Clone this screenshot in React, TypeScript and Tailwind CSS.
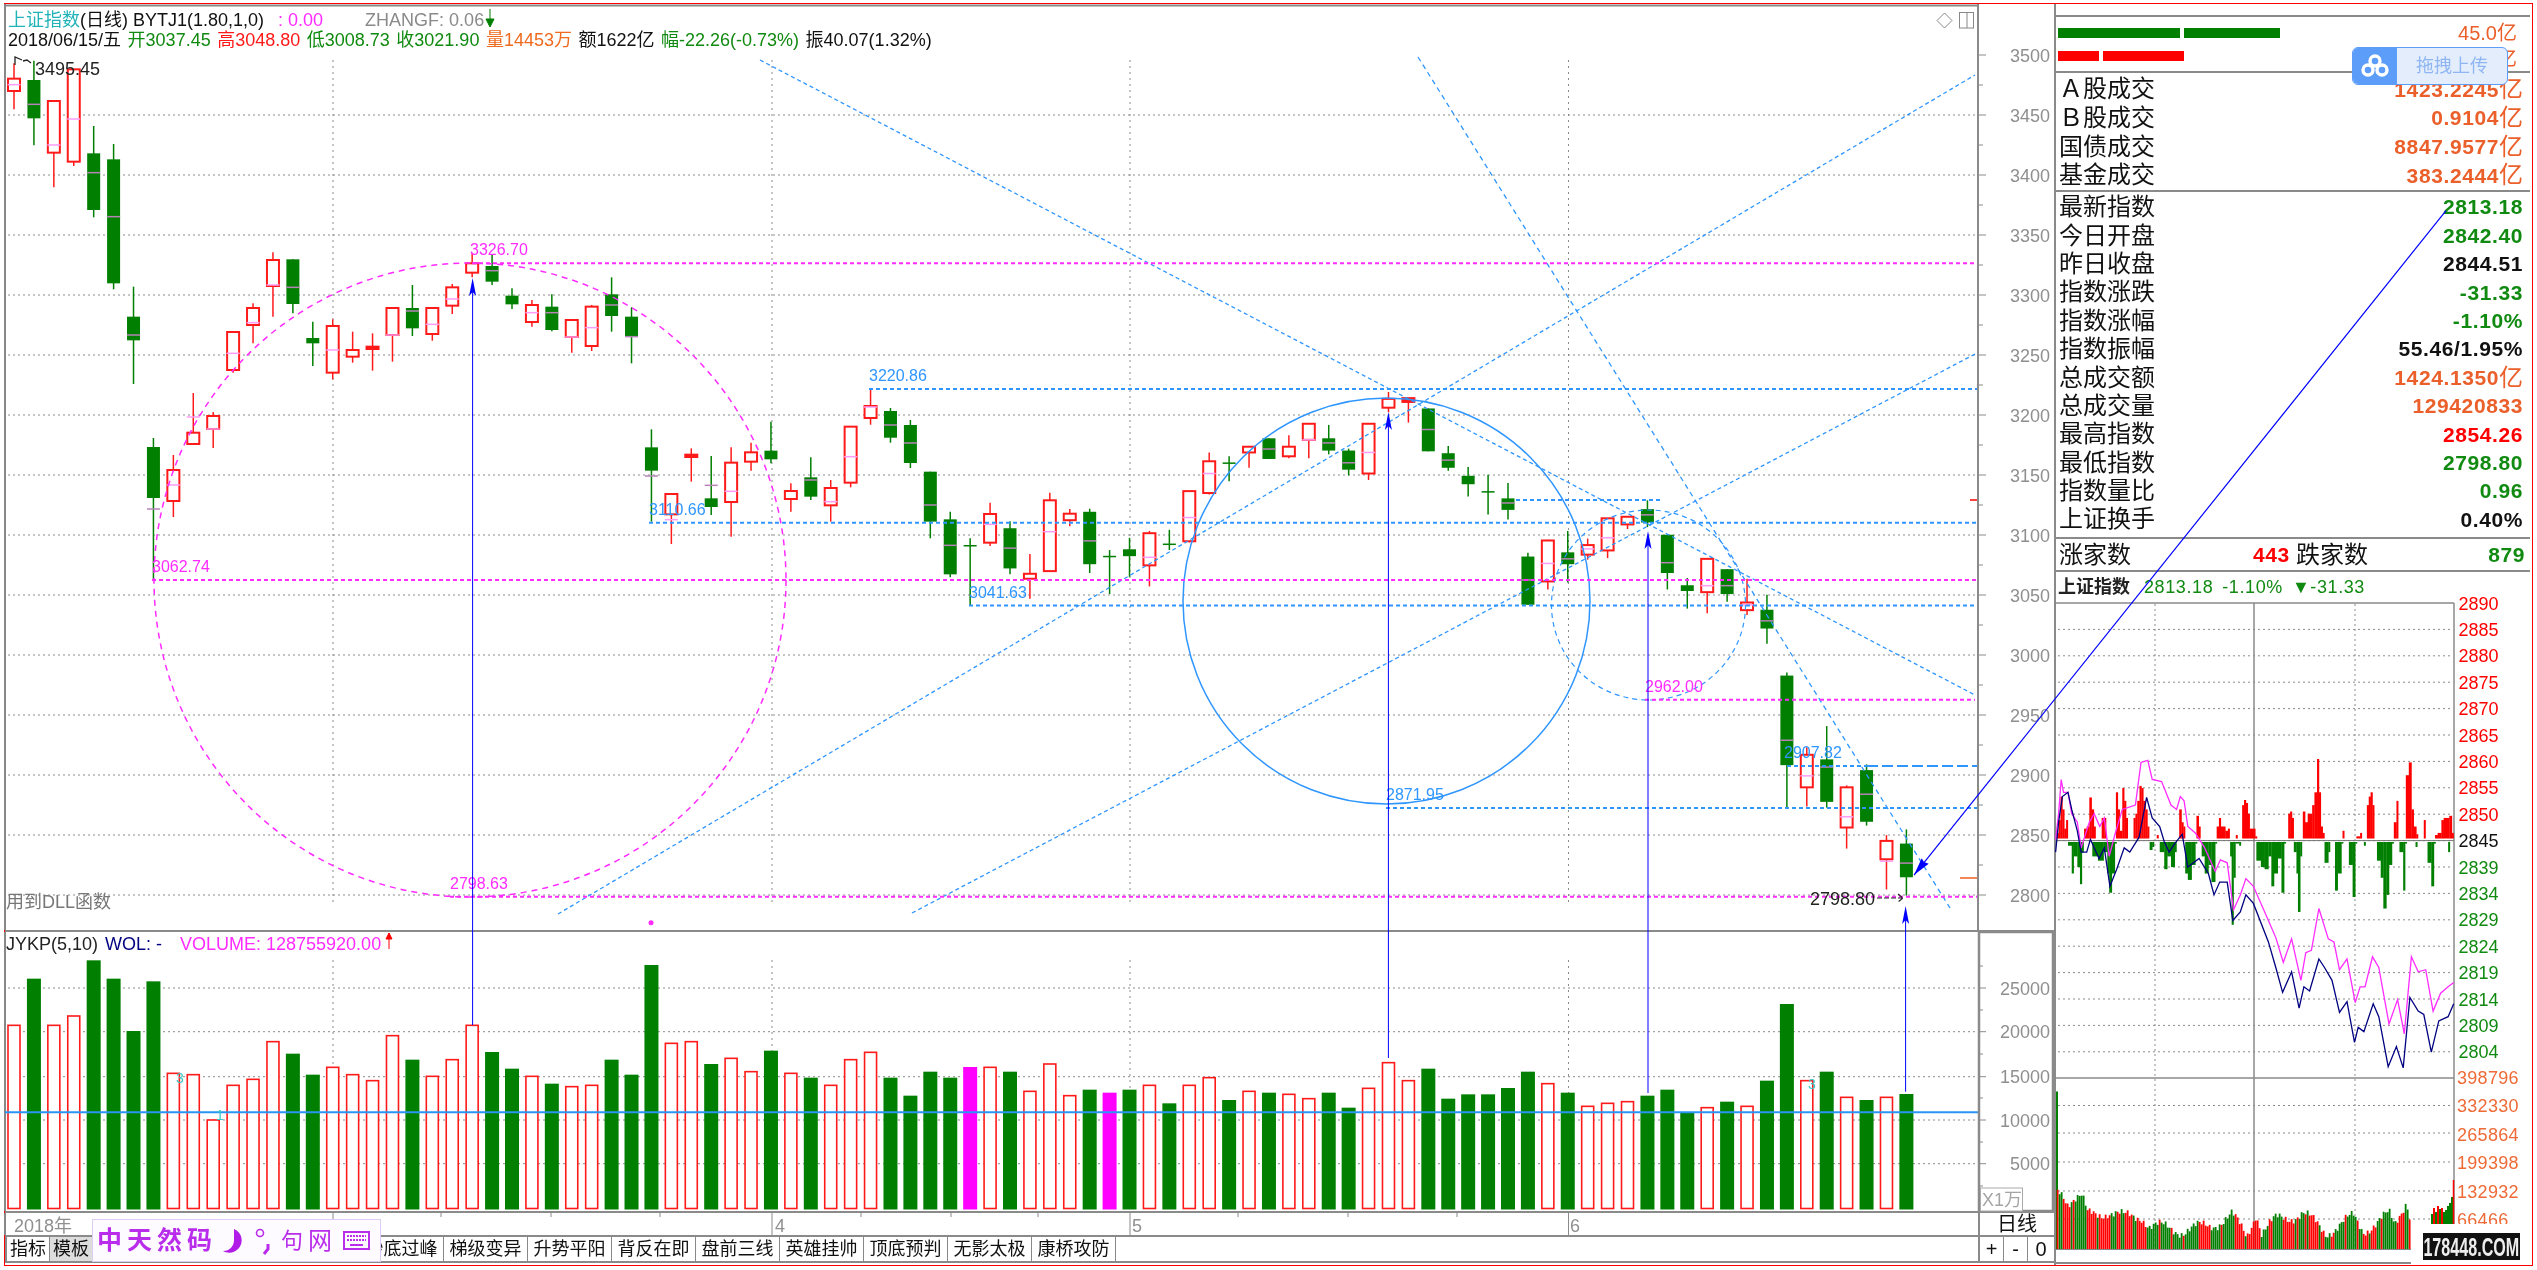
type Candle = [string, number, number, number, number, number?]

const z1 = (v: number) => v / 3
const z6 = (v: number) => v / 3 + 420
const z7 = (v: number) => v / 2.613 + 330
const same = (v: number) => v

const seg = (f: (v: number) => number, rows: Candle[]): Candle[] =>
  rows.map((r) => [r[0], f(r[1]), f(r[2]), f(r[3]), f(r[4]), r[5] === undefined ? undefined : f(r[5])])

const candles: Candle[] = [
  ...seg(z1, [
    ['r', 236, 273, 190, 328, 254],
    ['g', 240, 355, 182, 436, 313],
    ['r', 303, 458, 303, 562, 435],
    ['r', 208, 485, 208, 498, 357],
    ['g', 460, 630, 378, 652, 518],
    ['g', 478, 850, 432, 868, 650],
    ['g', 950, 1021, 860, 1152, 1005],
  ]),
  ...seg(same, [
    ['g', 447, 498, 438, 580, 509],
    ['r', 470, 501, 455, 517, 485],
    ['r', 432.7, 444, 393, 444, 417],
    ['r', 416, 429, 412, 448, 429],
  ]),
  ...seg(z1, [
    ['r', 996, 1110, 996, 1118, 1060],
    ['r', 924, 975, 910, 1030, 968],
    ['r', 780, 858, 757, 950, 855],
    ['g', 778, 912, 778, 940, 862],
    ['g', 1014, 1030, 965, 1098],
    ['r', 978, 1118, 958, 1138, 1050],
    ['r', 1050, 1070, 995, 1088],
    ['r', 1040, 1047, 1000, 1112],
    ['r', 924, 1005, 924, 1085, 1005],
    ['g', 924, 985, 855, 1008, 933],
    ['r', 924, 1002, 924, 1022, 973],
    ['r', 862, 917, 852, 942, 897],
    ['r', 790, 818, 762, 832],
    ['g', 798, 845, 765, 855, 812],
    ['g', 887, 913, 865, 927],
    ['r', 915, 966, 900, 980, 938],
    ['g', 920, 990, 883, 994, 938],
    ['r', 960, 1011, 960, 1058, 1011],
    ['r', 920, 1038, 915, 1053, 983],
    ['g', 883, 948, 832, 995, 915],
    ['g', 950, 1010, 922, 1090, 1010],
  ]),
  ...seg(z6, [
    ['g', 82, 152, 28, 305, 168],
    ['r', 222, 283, 222, 372, 299],
    ['r', 104, 111, 85, 185],
    ['g', 235, 261, 108, 285, 196],
    ['r', 128, 246, 82, 350, 214],
    ['r', 97, 125, 68, 152],
    ['g', 92, 118, 5, 130],
    ['r', 213, 237, 190, 275],
    ['g', 172, 230, 112, 240, 180],
    ['r', 204, 256, 180, 305, 245],
    ['r', 20, 188, 20, 202, 110],
  ]),
  ...seg(same, [
    ['r', 406, 418, 389, 424.7, 407],
    ['g', 411, 437.7, 408, 442.7, 425],
    ['g', 425, 463, 420, 468, 443],
  ]),
  ...seg(z6, [
    ['g', 155, 305, 155, 355, 255],
    ['g', 298, 463, 275, 472, 376],
    ['g', 375, 378, 355, 555],
    ['r', 282, 368, 248, 378, 313],
  ]),
  ...seg(z7, [
    ['g', 518, 623, 500, 638, 570],
    ['r', 637, 650, 585, 702],
    ['r', 445, 630, 425, 630, 527],
    ['r', 480, 497, 468, 513],
    ['g', 475, 612, 467, 635, 551],
    ['g', 590, 592, 575, 690],
    ['g', 573, 591, 543, 645],
    ['r', 531, 615, 525, 670, 594],
    ['g', 558, 561, 522, 575],
    ['r', 421, 552, 421, 555, 490],
    ['r', 343, 426, 320, 430, 375],
    ['g', 346, 349, 330, 395],
    ['r', 305, 320, 303, 360],
    ['g', 283, 337, 283, 337, 311],
    ['r', 305, 330, 275, 335],
    ['r', 245, 287, 245, 335, 287],
    ['g', 283, 315, 248, 325, 295],
    ['g', 315, 365, 310, 380, 347],
    ['r', 245, 375, 245, 392, 320],
    ['r', 180, 203, 162, 215],
    ['r', 178, 188, 178, 242],
    ['g', 205, 317, 205, 317, 260],
    ['g', 322, 360, 303, 368, 340],
    ['g', 381, 403, 358, 435],
    ['g', 421, 424, 378, 482],
    ['g', 440, 470, 400, 495, 452],
    ['g', 592, 718, 582, 718, 653],
    ['r', 550, 657, 548, 678, 610],
    ['g', 581, 612, 525, 660, 598],
    ['r', 562, 587, 545, 600, 572],
    ['r', 492, 576, 492, 596, 543],
    ['r', 488, 508, 488, 520],
    ['g', 468, 503, 445, 515, 483],
    ['g', 535, 635, 535, 678, 608],
    ['g', 667, 682, 648, 728],
    ['r', 598, 685, 598, 740, 668],
    ['g', 625, 690, 625, 710, 668],
    ['r', 712, 732, 650, 745, 718],
    ['g', 731, 780, 692, 820, 760],
    ['g', 903, 1137, 895, 1250, 1072],
    ['r', 1110, 1195, 1090, 1245, 1165],
    ['g', 1122, 1233, 1035, 1248, 1142],
    ['r', 1195, 1300, 1190, 1355, 1272],
    ['g', 1150, 1285, 1135, 1295, 1213],
    ['r', 1335, 1383, 1320, 1462, 1388],
    ['g', 1342, 1430, 1305, 1478, 1393],
  ]),
]

const volSeq = ('rgrrgggg' + 'rrrrrrgg' + 'rrrrgrrr' + 'ggrgrrgg' + 'grrgrrgr' + 'grrrgggg' + 'mrgrrrgm' + 'grgrrgrg' + 'rrggrrrg' + 'gggggrgr' + 'rrgggrgr' + 'ggrgrgrg').split('')
const volTops = [
  436, 296, 436, 408, 241, 296, 453, 304, 580, 584, 720, 616, 598, 485, 521, 584, 562, 584, 602, 467, 539, 589, 539, 436, 516, 566, 589, 611, 620, 616, 539, 584, 255,
  490, 485, 552, 535, 575, 512, 580, 593, 616, 539, 517, 593, 647, 575, 593, 561, 562, 575, 634, 552, 647, 629, 638, 629, 616, 670, 616, 593, 660, 634, 638, 643, 656,
  638, 683, 625, 548, 602, 566, 656, 643, 643, 624, 575, 611, 638, 679, 670, 665, 647, 629, 697, 683, 665, 679, 602, 372, 602, 575, 652, 660, 652, 642,
]

const cx = (i: number) => 14 + 19.92 * i
const GREEN = '#007f00'
const RED = '#ff1a1a'
const BLUE = '#2f96ff'
const PINK = '#ff2bff'
const GRID = '#8c8c8c'

const priceLabels = [3500, 3450, 3400, 3350, 3300, 3250, 3200, 3150, 3100, 3050, 3000, 2950, 2900, 2850, 2800]
const gridYs = [115, 175, 235, 295, 355, 415, 475, 535, 595, 655, 715, 775, 835, 895]
const monthXs = [333, 772, 1130, 1568.5]

const PriceChart = () => (
  <svg width={2049} height={926} viewBox="5 4 2049 926" className="overflow-visible">
    <line x1={5} x2={5} y1={4} y2={930} stroke="#888" strokeWidth={2} />
    <line x1={5} x2={1978} y1={5.5} y2={5.5} stroke="#8a8a8a" strokeWidth={2} />
    {gridYs.map((y) => (
      <line key={y} x1={8} x2={1978} y1={y} y2={y} stroke={GRID} strokeDasharray="2 3" />
    ))}
    {monthXs.map((x) => (
      <line key={x} x1={x} x2={x} y1={60} y2={906} stroke={GRID} strokeDasharray="2 4" />
    ))}

    {candles.map((c, i) => {
      const x = cx(i)
      const red = c[0] === 'r'
      const col = red ? RED : GREEN
      const thin = c[2] - c[1] < 4
      return (
        <g key={`candle-${i}`}>
          <line x1={x} x2={x} y1={c[3]} y2={c[4]} stroke={col} strokeWidth={1.5} />
          {red ? (
            <rect x={x - 6} y={c[1]} width={12} height={c[2] - c[1]} fill={thin ? col : '#fff'} stroke={col} strokeWidth={2} />
          ) : (
            <rect x={x - 6.5} y={c[1]} width={13} height={Math.max(c[2] - c[1], 1.5)} fill={col} />
          )}
          {c[5] !== undefined && <line x1={x - 6.5} x2={x + 6.5} y1={c[5]} y2={c[5]} stroke={red ? '#ff9cf5' : '#b684b6'} strokeWidth={1.5} />}
        </g>
      )
    })}

    {/* drawn studies */}
    <ellipse cx={470} cy={580} rx={316} ry={317} fill="none" stroke={PINK} strokeWidth={1.5} strokeDasharray="6 5" />
    <ellipse cx={1386.5} cy={601} rx={203.5} ry={203} fill="none" stroke={BLUE} strokeWidth={1.5} />
    <ellipse cx={1648.5} cy={605} rx={97} ry={95} fill="none" stroke={BLUE} strokeWidth={1.2} strokeDasharray="5 4" />
    <line x1={760} y1={60} x2={1975} y2={695} stroke={BLUE} strokeWidth={1.3} strokeDasharray="4 3" />
    <line x1={1418} y1={57} x2={1950} y2={908} stroke={BLUE} strokeWidth={1.3} strokeDasharray="5 4" />
    <line x1={558} y1={914} x2={1975} y2={75} stroke={BLUE} strokeWidth={1.3} strokeDasharray="4 3" />
    <line x1={912} y1={913} x2={1977} y2={353} stroke={BLUE} strokeWidth={1.3} strokeDasharray="4 3" />

    <line x1={472} y1={263.3} x2={1978} y2={263.3} stroke={PINK} strokeWidth={2} strokeDasharray="4 3" />
    <line x1={152} y1={580} x2={1978} y2={580} stroke={PINK} strokeWidth={2} strokeDasharray="4 3" />
    <line x1={450} y1={896.7} x2={1978} y2={896.7} stroke={PINK} strokeWidth={2} strokeDasharray="4 3" />
    <line x1={1645} y1={699.7} x2={1975} y2={699.7} stroke={PINK} strokeWidth={2} strokeDasharray="4 3" />

    <line x1={869} y1={389} x2={1978} y2={389} stroke={BLUE} strokeWidth={2} strokeDasharray="4 3" />
    <line x1={649} y1={522.7} x2={1978} y2={522.7} stroke={BLUE} strokeWidth={2} strokeDasharray="4 3" />
    <line x1={969} y1={605.5} x2={1978} y2={605.5} stroke={BLUE} strokeWidth={2} strokeDasharray="4 3" />
    <line x1={1516} y1={500} x2={1663} y2={500} stroke={BLUE} strokeWidth={2} strokeDasharray="4 3" />
    <line x1={1787} y1={766} x2={1867} y2={766} stroke={BLUE} strokeWidth={2} strokeDasharray="4 3" />
    <line x1={1867} y1={766} x2={1978} y2={766} stroke={BLUE} strokeWidth={2} strokeDasharray="11 4" />
    <line x1={1386} y1={808} x2={1978} y2={808} stroke={BLUE} strokeWidth={2} strokeDasharray="4 3" />

    <g fontSize={16} fill={PINK}>
      <text x={470} y={255}>3326.70</text>
      <text x={152} y={572}>3062.74</text>
      <text x={450} y={889}>2798.63</text>
      <text x={1645} y={692}>2962.00</text>
    </g>
    <g fontSize={16} fill={BLUE}>
      <text x={869} y={381}>3220.86</text>
      <text x={649} y={515}>3110.66</text>
      <text x={969} y={598}>3041.63</text>
      <text x={1784} y={758}>2907.82</text>
      <text x={1386} y={800}>2871.95</text>
    </g>

    <path d="M15 65V57l7 3M23 61l4-1 4 3" fill="none" stroke="#222" strokeWidth={1.3} />
    <text x={35} y={75} fontSize={18} fill="#222">3495.45</text>
    <text x={1810} y={905} fontSize={18} fill="#222">2798.80</text>
    <path d="M1877 898h26M1898 894l5 4-5 4" fill="none" stroke="#222" strokeWidth={1.2} strokeDasharray="5 2" />
    <text x={6} y={908} fontSize={18} fill="#777">用到DLL函数</text>
    <circle cx={651} cy={922.7} r={2.5} fill={PINK} />

    <line x1={1970} x2={1978} y1={500} y2={500} stroke="#f00" strokeWidth={1.5} />
    <line x1={1960} x2={1978} y1={878} y2={878} stroke="#f2611f" strokeWidth={1.5} />

    {/* top right icons */}
    <polygon points="1944.5,13 1952,20.5 1944.5,28 1937,20.5" fill="none" stroke="#888" />
    <rect x={1959.5} y={12.5} width={14} height={15.5} fill="#fff" stroke="#888" />
    <line x1={1967} x2={1967} y1={12} y2={28} stroke="#888" />

    {/* axis */}
    <line x1={1978} x2={1978} y1={4} y2={930} stroke="#8a8a8a" strokeWidth={2} />
    {Array.from({ length: 29 }, (_, i) => (
      <line key={i} x1={1978} x2={i % 2 ? 1983 : 1986} y1={55 + i * 30} y2={55 + i * 30} stroke="#8a8a8a" />
    ))}
    {priceLabels.map((p, i) => (
      <text key={p} x={2050} y={61.5 + i * 60} fontSize={18} fill="#8f8f8f" textAnchor="end">
        {p}
      </text>
    ))}
  </svg>
)

const volYs = [988, 1031.7, 1076.7, 1120, 1163.7]
const volLabels = [25000, 20000, 15000, 10000, 5000]

const VolumeChart = () => (
  <svg width={2049} height={279} viewBox="5 932 2049 279" className="overflow-visible">
    <line x1={5} x2={5} y1={932} y2={1211} stroke="#888" strokeWidth={2} />
    {volYs.map((y) => (
      <line key={y} x1={8} x2={1978} y1={y} y2={y} stroke={GRID} strokeDasharray="2 3" />
    ))}
    {monthXs.map((x) => (
      <line key={x} x1={x} x2={x} y1={960} y2={1209} stroke={GRID} strokeDasharray="2 4" />
    ))}
    {volTops.map((t, i) => {
      const top = t / 3 + 880
      const x = cx(i)
      const kind = volSeq[i]
      if (kind === 'r') return <rect key={`vol-${i}`} x={x - 6} y={top} width={12} height={1208.5 - top} fill="#fff" stroke={RED} strokeWidth={1.6} />
      return <rect key={`vol-${i}`} x={x - 7} y={top} width={14} height={1209.5 - top} fill={kind === 'g' ? GREEN : '#ff00ff'} />
    })}
    <line x1={5} x2={1978} y1={1112.3} y2={1112.3} stroke="#2a94f5" strokeWidth={2} />
    <g fontSize={14} fill="#39c7c7">
      <text x={176} y={1083}>3</text>
      <text x={216} y={1120}>1</text>
      <text x={1808} y={1089}>3</text>
    </g>

    <text y={950} fontSize={18}>
      <tspan x={6} fill="#222">JYKP(5,10)</tspan>
      <tspan x={105} fill="#000080">WOL: -</tspan>
      <tspan x={180} fill={PINK}>VOLUME: 128755920.00</tspan>
    </text>
    <path d="M389 933v16M386 939l3-6 3 6z" fill="#f00" stroke="#f00" />

    {/* axis */}
    <rect x={1979} y={932} width={74} height={279} fill="none" stroke="#8a8a8a" strokeWidth={2.5} />
    {[966, 988, 1010, 1031.7, 1054, 1076.7, 1098, 1120, 1142, 1163.7, 1186].map((y, i) => (
      <line key={y} x1={1978} x2={i % 2 ? 1986 : 1983} y1={y} y2={y} stroke="#8a8a8a" />
    ))}
    {volLabels.map((v, i) => (
      <text key={v} x={2050} y={volYs[i] + 6.5} fontSize={18} fill="#8f8f8f" textAnchor="end">
        {v}
      </text>
    ))}
    <rect x={1980.5} y={1188} width={42} height={23} fill="#fff" stroke="#aaa" />
    <text x={1982} y={1206} fontSize={18} fill="#a5a5a5">X1万</text>
  </svg>
)

const DateStrip = () => (
  <svg width={1973} height={22} viewBox="5 1213 1973 22" className="overflow-visible">
    <line x1={5} x2={5} y1={1213} y2={1235} stroke="#888" strokeWidth={2} />
    {[441, 551, 660, 861, 951, 1038, 1238, 1348, 1457].map((x) => (
      <line key={x} x1={x} x2={x} y1={1213} y2={1217} stroke="#8a8a8a" />
    ))}
    {monthXs.map((x) => (
      <line key={x} x1={x} x2={x} y1={1213} y2={1235} stroke="#8a8a8a" />
    ))}
    <g fontSize={18} fill="#8f8f8f">
      <text x={14} y={1232}>2018年</text>
      <text x={337} y={1232}>3</text>
      <text x={775} y={1232}>4</text>
      <text x={1132} y={1232}>5</text>
      <text x={1570} y={1232}>6</text>
    </g>
  </svg>
)

const tabs = ['抄底过峰', '梯级变异', '升势平阳', '背反在即', '盘前三线', '英雄挂帅', '顶底预判', '无影太极', '康桥攻防']

const TabBar = () => (
  <div className="flex h-[26px] border-b-2 border-[#8a8a8a]">
    <div className="flex w-[1973px] border-l-2 border-[#888] text-[18px] leading-none text-[#111]">
      <div className="flex w-[43px] items-center justify-center border-r border-[#888]">指标</div>
      <div className="flex w-[43px] items-center justify-center border-r border-[#888] bg-[#ddd]">模板</div>
      <div className="w-[267px]" />
      {tabs.map((t) => (
        <div key={t} className="flex w-[84px] items-center justify-center border-r border-[#888]">
          {t}
        </div>
      ))}
    </div>
    <div className="flex w-[76px] border-l-2 border-[#8a8a8a] text-[20px] leading-none text-[#111]">
      <div className="flex w-[24px] items-center justify-center border-r border-[#8a8a8a]">+</div>
      <div className="flex w-[24px] items-center justify-center border-r border-[#8a8a8a]">-</div>
      <div className="flex flex-1 items-center justify-center">0</div>
    </div>
  </div>
)

const ValueText = ({ value, unit, color }: { value: string; unit?: string; color: string }) => (
  <span className={`flex items-center ${color}`}>
    <span className="text-[21px] font-bold tracking-[0.6px]">{value}</span>
    {unit && <span className="text-[24px] leading-none">{unit}</span>}
  </span>
)

const Row = ({ label, value, unit, color, h }: { label: string; value: string; unit?: string; color: string; h: string }) => (
  <div className={`flex items-center justify-between pr-[7px] pl-[3px] ${h}`}>
    <span className="text-[24px] leading-none text-[#111]">{label}</span>
    <ValueText value={value} unit={unit} color={color} />
  </div>
)

const GREEN_TEXT = 'text-[#118a11]'
const ORANGE_TEXT = 'text-[#ea5f2a]'
const RED_TEXT = 'text-[#ff0000]'
const BLACK_TEXT = 'text-[#111]'

const tradeRows = [
  { label: 'Ａ股成交', value: '1423.2245', unit: '亿' },
  { label: 'Ｂ股成交', value: '0.9104', unit: '亿' },
  { label: '国债成交', value: '8847.9577', unit: '亿' },
  { label: '基金成交', value: '383.2444', unit: '亿' },
]

const indexRows = [
  { label: '最新指数', value: '2813.18', color: GREEN_TEXT },
  { label: '今日开盘', value: '2842.40', color: GREEN_TEXT },
  { label: '昨日收盘', value: '2844.51', color: BLACK_TEXT },
  { label: '指数涨跌', value: '-31.33', color: GREEN_TEXT },
  { label: '指数涨幅', value: '-1.10%', color: GREEN_TEXT },
  { label: '指数振幅', value: '55.46/1.95%', color: BLACK_TEXT },
  { label: '总成交额', value: '1424.1350', unit: '亿', color: ORANGE_TEXT },
  { label: '总成交量', value: '129420833', color: ORANGE_TEXT },
  { label: '最高指数', value: '2854.26', color: RED_TEXT },
  { label: '最低指数', value: '2798.80', color: GREEN_TEXT },
  { label: '指数量比', value: '0.96', color: GREEN_TEXT },
  { label: '上证换手', value: '0.40%', color: BLACK_TEXT },
]

const mx = (v: number) => v / 2.67 + 1950
const my = (v: number) => v / 2.34 + 600

const redBars = [
  285, 545, 290, 515, 295, 460, 300, 490, 305, 535, 310, 515, 358, 535, 365, 530, 372, 462, 378, 490, 384, 530, 405, 510, 412, 510, 443, 450, 448, 490, 453, 540, 460, 440, 465, 470, 470,
  510, 490, 510, 495, 500, 500, 470, 506, 435, 511, 440, 516, 470, 522, 490, 527, 530, 552, 550, 612, 490, 618, 520, 623, 530, 658, 505, 664, 530, 712, 530, 718, 510, 723, 530, 735, 540,
  742, 535, 763, 550, 780, 480, 785, 468, 790, 475, 795, 500, 800, 535, 815, 553, 903, 500, 908, 495, 913, 510, 942, 495, 948, 520, 955, 500, 967, 480, 973, 450, 980, 372, 985, 450, 990,
  530, 995, 545, 1048, 540, 1085, 553, 1095, 545, 1113, 480, 1118, 460, 1123, 450, 1128, 480, 1185, 520, 1192, 470, 1217, 410, 1225, 380, 1232, 490, 1238, 530, 1245, 548, 1265, 515, 1295,
  550, 1302, 545, 1312, 515, 1318, 510, 1333, 505, 1340, 545,
]
const greenBars = [
  315, 575, 325, 640, 330, 600, 340, 625, 347, 665, 352, 590, 380, 600, 395, 610, 410, 590, 420, 640, 425, 685, 432, 640, 440, 570, 533, 585, 540, 578, 560, 590, 572, 630, 580, 600, 590,
  625, 600, 590, 628, 640, 635, 655, 645, 620, 655, 570, 672, 600, 680, 640, 690, 620, 698, 660, 708, 570, 748, 600, 752, 760, 757, 650, 762, 570, 772, 575, 818, 610, 830, 625, 840, 630,
  850, 600, 858, 670, 865, 640, 875, 605, 885, 685, 892, 570, 918, 590, 925, 640, 929, 730, 935, 600, 1000, 615, 1010, 590, 1028, 680, 1035, 640, 1045, 570, 1065, 620, 1075, 695, 1082,
  570, 1105, 575, 1140, 610, 1150, 650, 1157, 722, 1165, 690, 1172, 620, 1180, 570, 1200, 590, 1210, 680, 1215, 570, 1243, 578, 1275, 615, 1285, 670, 1292, 570, 1330, 590,
]
const pairs = (flat: number[]) =>
  Array.from({ length: flat.length / 2 }, (_, i) => {
    const gap = i * 2 + 2 < flat.length ? flat[i * 2 + 2] - flat[i * 2] : 99
    return { x: flat[i * 2], y: flat[i * 2 + 1], w: gap <= 16 ? gap / 2.67 + 0.3 : 2 }
  })

const pinkLine = [
  [282, 560], [290, 500], [297, 420], [303, 450], [315, 450], [325, 500], [340, 520], [350, 580], [372, 520], [385, 500], [400, 530], [412, 510], [425, 600], [440, 550], [460, 490], [495, 480],
  [510, 380], [528, 375], [540, 420], [565, 425], [590, 480], [605, 490], [615, 460], [625, 470], [635, 530], [655, 545], [680, 580], [708, 635], [722, 608], [740, 615], [757, 725], [775, 690],
  [790, 652], [810, 670], [850, 750], [870, 790], [890, 848], [912, 793], [937, 890], [950, 825], [965, 820], [985, 722], [1010, 793], [1025, 800], [1040, 865], [1060, 840], [1082, 942],
  [1095, 905], [1108, 905], [1128, 835], [1145, 860], [1172, 992], [1195, 935], [1213, 1015], [1232, 835], [1250, 870], [1270, 865], [1290, 962], [1310, 920], [1330, 905], [1345, 895],
]
const navyLine = [
  [282, 590], [290, 520], [300, 460], [315, 450], [325, 490], [340, 540], [350, 590], [365, 590], [375, 560], [390, 590], [398, 605], [412, 580], [427, 670], [445, 630], [465, 580], [480, 590],
  [505, 555], [525, 462], [540, 510], [560, 530], [572, 565], [585, 590], [600, 570], [620, 548], [635, 625], [665, 605], [690, 640], [705, 690], [720, 660], [740, 660], [755, 750], [775, 730],
  [790, 690], [810, 710], [850, 800], [870, 860], [888, 918], [912, 870], [932, 955], [945, 905], [960, 915], [985, 840], [1000, 860], [1020, 890], [1040, 965], [1060, 940], [1080, 1035],
  [1090, 1000], [1105, 1010], [1130, 945], [1145, 975], [1170, 1092], [1192, 1045], [1210, 1095], [1228, 930], [1250, 962], [1265, 970], [1285, 1058], [1305, 985], [1330, 975], [1345, 945],
]
const toPoints = (line: number[][]) => line.map(([x, y]) => `${mx(x).toFixed(1)},${my(y).toFixed(1)}`).join(' ')

const volKnots = [
  [285, 1380], [300, 1385], [310, 1405], [330, 1400], [350, 1400], [365, 1440], [420, 1430], [460, 1445], [510, 1440], [530, 1465], [620, 1475], [690, 1465], [750, 1440], [790, 1490], [815, 1430],
  [830, 1480], [870, 1450], [940, 1435], [1000, 1480], [1075, 1445], [1100, 1475], [1170, 1440], [1185, 1465], [1217, 1400], [1230, 1460],
]
const volGreens = [[320, 355], [420, 440], [530, 650], [690, 750], [815, 890], [930, 945], [1000, 1100], [1135, 1180]]

const envelope = (x: number) => {
  for (let i = 0; i < volKnots.length - 1; i++) {
    const [x0, y0] = volKnots[i]
    const [x1, y1] = volKnots[i + 1]
    if (x >= x0 && x <= x1) return y0 + ((y1 - y0) * (x - x0)) / (x1 - x0)
  }
  return 1460
}

const minuteBars = Array.from({ length: 177 }, (_, i) => {
  const z = 285 + i * 5.34
  const top = envelope(z) + Math.sin(i * 12.9) * 13 + Math.sin(i * 2.3) * 6
  const base = volGreens.some(([a, b]) => z >= a && z <= b)
  const green = Math.sin(i * 7.3) > 0.8 ? !base : base
  return { x: mx(z), top: my(top), green }
})

const lastBars = [
  { x: 2431, top: 1214, green: true },
  { x: 2433, top: 1208, green: false },
  { x: 2435, top: 1212, green: true },
  { x: 2437, top: 1206, green: false },
  { x: 2439, top: 1209, green: true },
  { x: 2441, top: 1208, green: false },
  { x: 2443, top: 1212, green: true },
  { x: 2445, top: 1210, green: true },
  { x: 2447, top: 1206, green: true },
  { x: 2449, top: 1203, green: true },
  { x: 2451, top: 1197, green: true },
]

const minuteLabels = [2890, 2885, 2880, 2875, 2870, 2865, 2860, 2855, 2850, 2845, 2839, 2834, 2829, 2824, 2819, 2814, 2809, 2804]
const minuteVolumes = [398796, 332330, 265864, 199398, 132932, 66466]

const MinuteChart = () => (
  <svg width={476} height={663} viewBox="2056 602 476 663" className="overflow-visible">
    <line x1={2056} x2={2454} y1={603} y2={603} stroke="#8a8a8a" strokeWidth={1.5} />
    {minuteLabels.map((_, k) =>
      k > 0 ? <line key={k} x1={2058} x2={2452} y1={603 + 26.4 * k} y2={603 + 26.4 * k} stroke={GRID} strokeDasharray="2 3" /> : null,
    )}
    {[1105.5, 1133, 1162, 1191, 1219].map((y) => (
      <line key={y} x1={2058} x2={2452} y1={y} y2={y} stroke={GRID} strokeDasharray="2 3" />
    ))}
    {[2155, 2355].map((x) => (
      <line key={x} x1={x} x2={x} y1={604} y2={1249} stroke={GRID} strokeDasharray="2 3" />
    ))}
    <line x1={2254} x2={2254} y1={603} y2={1249} stroke="#8a8a8a" strokeWidth={1.5} />
    <line x1={2454} x2={2454} y1={603} y2={1249} stroke="#8a8a8a" strokeWidth={1.5} />
    <line x1={2056} x2={2454} y1={1078} y2={1078} stroke="#8a8a8a" strokeWidth={1.5} />
    <line x1={2056} x2={2454} y1={840.6} y2={840.6} stroke="#777" />

    {pairs(redBars).map((b) => (
      <rect key={`red-${b.x}`} x={mx(b.x)} y={my(b.y)} width={b.w} height={838.5 - my(b.y)} fill="#f00" />
    ))}
    {pairs(greenBars).map((b) => (
      <rect key={`green-${b.x}`} x={mx(b.x)} y={842} width={b.w} height={my(b.y) - 842} fill={GREEN} />
    ))}
    <polyline points={toPoints(pinkLine)} fill="none" stroke="#ff2bff" strokeWidth={1.3} />
    <polyline points={toPoints(navyLine)} fill="none" stroke="#000080" strokeWidth={1.3} />

    <rect x={2056} y={1091.5} width={2} height={157.5} fill={GREEN} />
    {minuteBars.map((b, i) => (
      <rect key={`mv-${i}`} x={b.x} y={b.top} width={1.8} height={1249 - b.top} fill={b.green ? GREEN : '#f00'} />
    ))}
    {lastBars.map((b) => (
      <rect key={b.x} x={b.x} y={b.top} width={2} height={1249 - b.top} fill={b.green ? GREEN : '#f00'} />
    ))}
    <line x1={2453.5} x2={2453.5} y1={1180} y2={1224} stroke="#f00" strokeWidth={1.5} />
    <line x1={2056} x2={2454} y1={1249.5} y2={1249.5} stroke="#8a8a8a" />
    <line x1={2056} x2={2530} y1={1263} y2={1263} stroke="#8a8a8a" strokeWidth={2} />

    {minuteLabels.map((p, k) => (
      <text key={p} x={2458.5} y={609.5 + 26.4 * k} fontSize={18} fill={p > 2845 ? '#ff0000' : p === 2845 ? '#111' : '#118a11'}>
        {p}
      </text>
    ))}
    {minuteVolumes.map((v, i) => (
      <text key={v} x={2457} y={1083.5 + 28.5 * i} fontSize={18} letterSpacing={0.3} fill="#ee6a36">
        {v}
      </text>
    ))}
  </svg>
)

const SidePanel = () => (
  <div className="flex h-[1261px] w-[478px] flex-col border-l-2 border-[#8a8a8a]">
    <div className="mr-[2px] h-[13px] border-b-2 border-[#8a8a8a]" />
    <div className="mr-[2px] flex h-[56px] justify-between border-b-2 border-[#8a8a8a] pt-[11px] pr-[13px] pl-[2px]">
      <div className="flex flex-col gap-[13.5px]">
        <div className="flex gap-[4px]">
          <div className="h-[9.5px] w-[122px] bg-[#007f00]" />
          <div className="h-[9.5px] w-[96px] bg-[#007f00]" />
        </div>
        <div className="flex gap-[4px]">
          <div className="h-[9.5px] w-[41px] bg-[#ff0000]" />
          <div className="h-[9.5px] w-[81px] bg-[#ff0000]" />
        </div>
      </div>
      <div className={`-mt-[6px] flex flex-col gap-[3px] text-[20px] leading-[23px] ${ORANGE_TEXT}`}>
        <span>45.0亿</span>
        <span>36.0亿</span>
      </div>
    </div>
    <div className="mr-[2px] h-[119px] border-b-2 border-[#8a8a8a] pt-[2px]">
      {tradeRows.map((r) => (
        <Row key={r.label} label={r.label} value={r.value} unit={r.unit} color={ORANGE_TEXT} h="h-[28.7px]" />
      ))}
    </div>
    <div className="mr-[2px] h-[347px] border-b-2 border-[#8a8a8a] pt-[1px]">
      {indexRows.map((r) => (
        <Row key={r.label} label={r.label} value={r.value} unit={r.unit} color={r.color} h="h-[28.4px]" />
      ))}
    </div>
    <div className="mr-[2px] grid h-[33px] grid-cols-[194px_43px_1fr_auto] items-center border-b-2 border-[#8a8a8a] pr-[5px] pl-[3px] text-[24px] leading-none">
      <span className="text-[#111]">涨家数</span>
      <span className="text-[21px] font-bold tracking-[0.6px] text-[#ff0000]">443</span>
      <span className="text-[#111]">跌家数</span>
      <span className="text-[21px] font-bold tracking-[0.6px] text-[#118a11]">879</span>
    </div>
    <div className="flex h-[30px] items-center pl-[2px] leading-none">
      <span className="w-[86px] text-[18px] font-bold text-[#222]">上证指数</span>
      <span className="flex gap-[9px] text-[18px] tracking-[0.6px] text-[#118a11]">
        <span>2813.18</span>
        <span>-1.10%</span>
        <span>▼-31.33</span>
      </span>
    </div>
    <MinuteChart />
  </div>
)

// arrows of the study run across panes, so they sit over the whole page
const Arrows = () => (
  <svg width={2537} height={1270} className="pointer-events-none absolute top-0 left-0">
    {[
      [472.6, 278, 1025],
      [1388.4, 412, 1058],
      [1648, 531, 1093],
      [1905.6, 906, 1091.7],
    ].map(([x, top, bottom]) => (
      <g key={x}>
        <line x1={x} x2={x} y1={top + 10} y2={bottom} stroke="#0000ff" />
        <polygon points={`${x},${top} ${x + 3.5},${top + 18} ${x},${top + 14} ${x - 3.5},${top + 18}`} fill="#0000ff" />
      </g>
    ))}
    <line x1={2446} y1={210.6} x2={1914} y2={875} stroke="#0000ff" strokeWidth={1.2} />
    <polygon points="1914,875 1928.7,863.8 1924,862 1921.7,858.2" fill="#0000ff" />
    <path d="M490 9v12M486 19l4 8 4-8z" fill="#007f00" stroke="#007f00" />
  </svg>
)

const UploadBadge = () => (
  <div className="absolute top-[47px] left-[2352px] flex h-[38px] w-[156px] overflow-hidden rounded-[6px] border border-[#5b9df9] bg-[#e3edfc]">
    <div className="flex w-[44px] items-center justify-center bg-[#5b9df9]">
      <svg width={30} height={24} viewBox="0 0 30 24" fill="none" stroke="#fff" strokeWidth={3.4}>
        <circle cx={15} cy={7} r={5} />
        <circle cx={8} cy={16} r={5} />
        <circle cx={22} cy={16} r={5} />
      </svg>
    </div>
    <div className="flex flex-1 items-center pl-[19px] text-[18px] leading-none text-[#8fb6f2]">拖拽上传</div>
  </div>
)

const ImeBar = () => (
  <div className="absolute top-[1219px] left-[92px] flex h-[43px] w-[289px] items-center border border-[#dccdf2] bg-[#fdfbff] pl-[4px] leading-none text-[#b92cec]">
    <div className="flex gap-[5px] text-[25px] font-bold">
      <span>中</span>
      <span>天</span>
      <span>然</span>
      <span>码</span>
    </div>
    <svg width={22} height={26} viewBox="0 0 22 26" className="ml-[10px]">
      <path d="M12 1c8 3 10 13 5 19-4 5-11 6-16 3 7 0 11-5 11-11 0-4 0-8 0-11z" fill="#b01be8" />
    </svg>
    <svg width={16} height={28} viewBox="0 0 16 28" className="ml-[11px]" fill="none" stroke="#b92cec">
      <circle cx={5} cy={6} r={3.5} strokeWidth={1.6} />
      <path d="M13 17v5l-4 5" strokeWidth={3} />
    </svg>
    <span className="ml-[10px] text-[22px]">句</span>
    <span className="ml-[5px] text-[24px]">网</span>
    <svg width={27} height={19} viewBox="0 0 27 19" className="ml-[11px]" fill="none" stroke="#b92cec" strokeWidth={2}>
      <rect x={1} y={1} width={25} height={17} />
      <path d="M4 5h19M4 9h19" strokeWidth={2} strokeDasharray="2 1" />
      <path d="M7 14h13" />
    </svg>
  </div>
)

const Watermark = () => (
  <div className="absolute top-[1224px] left-[2411px] h-[40px] w-[119px] bg-white pt-[9px] pl-[12px]">
    <div className="flex h-[27px] w-[97px] items-center justify-center overflow-hidden bg-[#111]">
      <span className="scale-x-[0.62] text-[26px] leading-none font-bold whitespace-nowrap text-[#eee]">178448.COM</span>
    </div>
  </div>
)

export default function App() {
  return (
    <div className="relative h-[1270px] w-[2537px] overflow-hidden bg-white font-['Liberation_Sans','Noto_Sans_CJK_SC',sans-serif] blur-[0.4px]">
      <div className="absolute top-[3px] left-[4px] h-[1263px] w-[2529px] border border-[#f00]">
        <div className="flex">
          <div className="w-[2049px]">
            <div className="relative h-[928px] border-b-2 border-[#8a8a8a]">
              <PriceChart />
              <div className="absolute top-[6px] left-[3px] text-[18px] leading-[20px] text-[#111]">
                <div className="flex h-[20px]">
                  <span className="text-[#22b3b8]">上证指数</span>
                  <span>(日线) BYTJ1(1.80,1,0)</span>
                  <span className="ml-[14px] text-[#ff2bff]">: 0.00</span>
                  <span className="ml-[42px] text-[#8a8a8a]">ZHANGF: 0.06</span>
                </div>
                <div className="flex h-[20px] gap-[6.5px]">
                  <span>2018/06/15/五</span>
                  <span className="text-[#118a11]">开3037.45</span>
                  <span className="text-[#ff1a1a]">高3048.80</span>
                  <span className="text-[#118a11]">低3008.73</span>
                  <span className="text-[#118a11]">收3021.90</span>
                  <span className="text-[#ee6a1f]">量14453万</span>
                  <span>额1622亿</span>
                  <span className="text-[#118a11]">幅-22.26(-0.73%)</span>
                  <span>振40.07(1.32%)</span>
                </div>
              </div>
            </div>
            <div className="h-[281px] border-b-2 border-[#8a8a8a]">
              <VolumeChart />
            </div>
            <div className="flex h-[24px] border-b-2 border-[#8a8a8a]">
              <DateStrip />
              <div className="flex w-[76px] items-center justify-center border-l-2 border-[#8a8a8a] text-[20px] leading-none text-[#111]">日线</div>
            </div>
            <TabBar />
          </div>
          <SidePanel />
        </div>
      </div>
      <Arrows />
      <UploadBadge />
      <ImeBar />
      <Watermark />
    </div>
  )
}
